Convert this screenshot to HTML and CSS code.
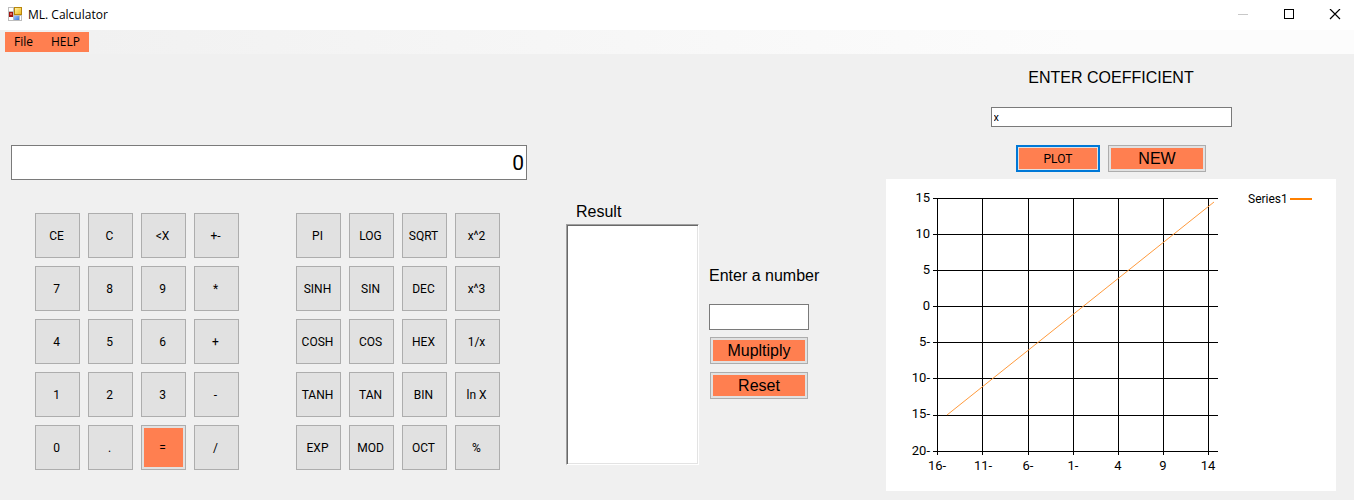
FILE: index.html
```html
<!DOCTYPE html>
<html lang="en">
<head>
<meta charset="utf-8">
<title>ML. Calculator</title>
<link rel="stylesheet" href="styles.css">
</head>
<body>
<header class="titlebar">
  <svg class="app-icon" width="14" height="14" viewBox="0 0 14 14" aria-hidden="true">
    <defs>
      <linearGradient id="gold" x1="0" y1="0" x2="1" y2="1"><stop offset="0" stop-color="#fff0a0"/><stop offset="1" stop-color="#eebb22"/></linearGradient>
      <linearGradient id="sky" x1="0" y1="0" x2="1" y2="1"><stop offset="0" stop-color="#9cc4ff"/><stop offset="1" stop-color="#3c78dc"/></linearGradient>
    </defs>
    <path d="M0 0H14V14H0Z" fill="#bdbdbd"/>
    <path d="M1 1H5V4H1ZM1 10H5V13H1ZM12 9H13V13H12Z" fill="#fff"/>
    <rect x="1" y="5" width="4" height="5" fill="#a01410"/>
    <rect x="2" y="6" width="2" height="2" fill="#e0685c"/>
    <rect x="6" y="0" width="8" height="8" fill="#b8860b"/>
    <rect x="7" y="1" width="6" height="6" fill="url(#gold)"/>
    <rect x="6" y="9" width="5" height="4" fill="url(#sky)"/>
  </svg>
  <h1 class="title">ML. Calculator</h1>
  <div class="window-controls">
    <button class="window-button" aria-label="Minimize" disabled><svg width="12" height="12" viewBox="0 0 12 12"><path d="M1 5.500H11" stroke="#c8c8c8"/></svg></button>
    <button class="window-button" aria-label="Maximize"><svg width="12" height="12" viewBox="0 0 12 12"><rect x="1.500" y="0.500" width="9" height="9" fill="none" stroke="#000"/></svg></button>
    <button class="window-button" aria-label="Close"><svg width="12" height="12" viewBox="0 0 12 12"><path d="M1 0L11 10M11 0L1 10" stroke="#000" stroke-width="1.200"/></svg></button>
  </div>
</header>
<nav class="menubar">
  <button class="menu-item">File</button><button class="menu-item">HELP</button>
</nav>
<main class="workspace">
  <section class="calculator">
    <input class="field display" type="text" value="0" aria-label="Display">
    <div class="keypads">
      <div class="keypad">
        <button class="key">CE</button><button class="key">C</button><button class="key">&lt;X</button><button class="key">+-</button>
        <button class="key">7</button><button class="key">8</button><button class="key">9</button><button class="key">*</button>
        <button class="key">4</button><button class="key">5</button><button class="key">6</button><button class="key">+</button>
        <button class="key">1</button><button class="key">2</button><button class="key">3</button><button class="key">-</button>
        <button class="key">0</button><button class="key">.</button><button class="key accent">=</button><button class="key">/</button>
      </div>
      <div class="keypad">
        <button class="key">PI</button><button class="key">LOG</button><button class="key">SQRT</button><button class="key">x^2</button>
        <button class="key">SINH</button><button class="key">SIN</button><button class="key">DEC</button><button class="key">x^3</button>
        <button class="key">COSH</button><button class="key">COS</button><button class="key">HEX</button><button class="key">1/x</button>
        <button class="key">TANH</button><button class="key">TAN</button><button class="key">BIN</button><button class="key">ln X</button>
        <button class="key">EXP</button><button class="key">MOD</button><button class="key">OCT</button><button class="key">%</button>
      </div>
    </div>
  </section>
  <section class="multiples">
    <div class="result">
      <label class="label result-label" for="result">Result</label>
      <select class="result-list" id="result" size="10"></select>
    </div>
    <div class="number">
      <label class="label" for="number">Enter a number</label>
      <input class="field number-field" id="number" type="text">
      <button class="action accent">Mupltiply</button>
      <button class="action accent">Reset</button>
    </div>
  </section>
  <section class="plotter">
    <label class="label" for="coefficient">ENTER COEFFICIENT</label>
    <input class="field coefficient" id="coefficient" type="text" value="x">
    <div class="plot-actions">
      <button class="action accent primary">PLOT</button>
      <button class="action accent">NEW</button>
    </div>
    <svg class="chart" viewBox="0 0 450 312" role="img" aria-label="Series1 line chart">
      <path class="grid" d="M47 19.500H332M47 55.500H332M47 91.500H332M47 127.500H332M47 163.500H332M47 199.500H332M47 236.500H332M47 272.500H332M51.500 19V276M96.500 19V276M142.500 19V276M187.500 19V276M232.500 19V276M277.500 19V276M322.500 19V276"/>
      <path class="series" d="M61 236L328 23"/>
      <g class="axis y-axis">
        <text x="44" y="23">15</text><text x="44" y="59">10</text><text x="44" y="95">5</text><text x="44" y="131">0</text>
        <text x="44" y="167">5-</text><text x="44" y="203">10-</text><text x="44" y="239">15-</text><text x="44" y="276">20-</text>
      </g>
      <g class="axis x-axis">
        <text x="51" y="291">16-</text><text x="97" y="291">11-</text><text x="142" y="291">6-</text><text x="187" y="291">1-</text>
        <text x="232" y="291">4</text><text x="277" y="291">9</text><text x="322" y="291">14</text>
      </g>
      <text class="legend" x="362" y="24">Series1</text>
      <path class="legend-line" d="M404 20H426"/>
    </svg>
  </section>
</main>
</body>
</html>
```

FILE: styles.css
```css
* { box-sizing: border-box; }

body {
  margin: 0;
  background: #f0f0f0;
  color: #000;
  font: 12px/16px Roboto, sans-serif;
}

button, input, select { margin: 0; color: inherit; font: inherit; border-radius: 0; outline: none; }

.titlebar {
  display: flex;
  align-items: center;
  height: 30px;
  padding-left: 8px;
  background: #fff;
}
.app-icon { margin-bottom: 2px; }
.title { margin: 0 0 0 6px; font: 12px/16px "Open Sans", sans-serif; }
.window-controls { display: flex; margin: 0 -4px 0 auto; }
.window-button {
  display: flex;
  align-items: center;
  justify-content: center;
  width: 46px;
  height: 28px;
  padding: 0;
  border: 0;
  background: none;
}

.menubar {
  display: flex;
  height: 24px;
  padding: 2px 5px;
  background: linear-gradient(90deg, #f0f0f0, #fcfcfc 80%);
}
.menu-item {
  height: 20px;
  padding: 0 9px;
  border: 0;
  background: #ff7f50;
  font: 12px/16px "Open Sans", sans-serif;
}

.workspace {
  display: grid;
  grid-template-columns: minmax(516px, 516fr) 254px minmax(450px, 450fr);
  grid-template-columns: 516fr 293fr 66fr 450fr;
  align-items: start;
  padding: 15px 18px 9px 11px;
}

.field {
  display: block;
  padding: 0 2px;
  border: 1px solid #7a7a7a;
  background: #fff;
}
.label { font: 16px/18px "Liberation Sans", Arial, sans-serif; }

.calculator { padding-top: 76px; }
.display { width: 100%; height: 35px; padding: 0 2px; font-size: 21px; text-align: right; }
.keypads { display: flex; gap: 57px; padding: 33px 0 0 24px; }
.keypad { display: grid; grid-template-columns: repeat(4, 45px); gap: 8px; }
.key {
  height: 45px;
  padding: 0 2px 0 0;
  border: 1px solid #adadad;
  background: #e1e1e1;
}
.accent { background: #ff7f50; box-shadow: inset 0 0 0 2px #e1e1e1; }

.multiples { display: flex; gap: 10px; padding: 134px 0 0 39px; }
.result-label { display: block; padding: 0 10px; }
.result-list {
  display: block;
  width: 133px;
  height: 241px;
  margin-top: 3px;
  border: 1px solid;
  border-color: #a0a0a0 #fff #fff #a0a0a0;
  background: #fff;
  box-shadow: inset 1px 1px #696969, inset -1px -1px #e3e3e3;
}
.number { display: flex; flex-direction: column; align-items: flex-start; padding-top: 64px; white-space: nowrap; }
.number-field { width: 100px; height: 26px; margin: 19px 0 7px; }
.action {
  width: 98px;
  height: 27px;
  padding: 0;
  border: 1px solid #adadad;
  font: 16px/18px "Liberation Sans", Arial, sans-serif;
}
.number .action { margin: 0 1px 8px; }
.primary {
  width: 84px;
  border: 2px solid #0078d7;
  box-shadow: inset 0 0 0 1px #e1e1e1;
  font: 12px/16px Roboto, sans-serif;
}

.plotter { display: flex; flex-direction: column; align-items: center; grid-column: 4; }
.coefficient { width: 241px; height: 20px; margin: 20px 0 18px; font-size: 11px; }
.plot-actions { display: flex; gap: 8px; }
.chart { display: block; width: 100%; margin-top: 7px; background: #fff; }
.grid { stroke: #000; fill: none; shape-rendering: crispEdges; }
.series { stroke: #ff9a3c; fill: none; }
.axis { font: 13px Roboto, sans-serif; }
.y-axis { text-anchor: end; }
.x-axis { text-anchor: middle; }
.legend { font: 12px Roboto, sans-serif; }
.legend-line { stroke: #ff8000; stroke-width: 2; }
```
